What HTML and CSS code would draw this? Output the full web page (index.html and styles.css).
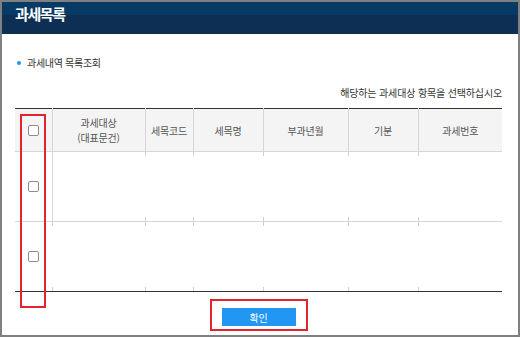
FILE: index.html
```html
<!DOCTYPE html>
<html lang="ko">
<head>
  <meta charset="UTF-8" />
  <meta name="viewport" content="width=device-width, initial-scale=1.0"/>
  <title>과세목록</title>
  <link rel="stylesheet" href="styles.css">
</head>
<body>
  <div class="frame">
    <div class="header">
      <h1>과세목록</h1>
    </div>

    <div class="content">
      <p class="subtitle">과세내역 목록조회</p>
      <p class="guide">해당하는 과세대상 항목을 선택하십시오</p>

      <table class="list">
        <colgroup>
          <col style="width: 37px">
          <col style="width: 93px">
          <col style="width: 48px">
          <col style="width: 70px">
          <col style="width: 85px">
          <col style="width: 70px">
          <col style="width: 84px">
        </colgroup>
        <thead>
          <tr>
            <th><input type="checkbox" class="chk"></th>
            <th>과세대상<br>(대표문건)</th>
            <th>세목코드</th>
            <th>세목명</th>
            <th>부과년월</th>
            <th>기분</th>
            <th>과세번호</th>
          </tr>
        </thead>
        <tbody>
          <tr class="first">
            <td><input type="checkbox" class="chk"></td>
            <td></td><td></td><td></td><td></td><td></td><td></td>
          </tr>
          <tr>
            <td><input type="checkbox" class="chk"></td>
            <td></td><td></td><td></td><td></td><td></td><td></td>
          </tr>
        </tbody>
      </table>

      <div class="actions">
        <button class="btn-ok">확인</button>
      </div>
    </div>

    <!-- annotation boxes -->
    <div class="mark mark-check"></div>
    <div class="mark mark-btn"></div>
  </div>
</body>
</html>
```

FILE: styles.css
```css
* {
  box-sizing: border-box;
}

body {
  margin: 0;
  font-family: "Noto Sans CJK KR", "Noto Sans", sans-serif;
  color: #333;
}

.frame {
  position: relative;
  width: 520px;
  height: 337px;
  border: 2px solid #808080;
  background: #fff;
}

.header {
  height: 32px;
  padding-left: 13px;
  background: linear-gradient(#083a66 0, #083a66 13px, #0d2f53 13px);
}

.header h1 {
  margin: 0;
  font-size: 15px;
  line-height: 24px;
  font-weight: bold;
  letter-spacing: -1.4px;
  color: #fff;
}

.content {
  padding: 0 16px 0 13px;
}

.subtitle {
  display: flex;
  align-items: center;
  gap: 6px;
  margin: 22px 0 0 2px;
  font-size: 10px;
  line-height: 14px;
  letter-spacing: -0.3px;
  color: #333;
}

.subtitle::before {
  content: "";
  width: 4px;
  height: 4px;
  border-radius: 50%;
  background: #2196f3;
}

.guide {
  margin: 16px 0 8px;
  text-align: right;
  font-size: 10px;
  line-height: 14px;
  letter-spacing: -0.15px;
  color: #333;
}

.list {
  width: 487px;
  table-layout: fixed;
  border-collapse: collapse;
  border-top: 1px solid #333;
}

.list th {
  height: 43px;
  padding: 0;
  background: #f4f4f4;
  border-bottom: 1px solid #d6d6d6;
  font-size: 10px;
  line-height: 15px;
  font-weight: normal;
  letter-spacing: -0.2px;
  color: #555;
}

.list th + th {
  border-left: 1px solid #d6d6d6;
}

.list td {
  height: 70px;
  padding: 0;
  text-align: center;
  border-bottom: 1px solid #d6d6d6;
}

/* short ticks at the column edges of the body rows */
.list td + td {
  background:
    linear-gradient(#d0d0d0, #d0d0d0) left top / 1px 4px no-repeat,
    linear-gradient(#d0d0d0, #d0d0d0) left bottom / 1px 4px no-repeat;
}

.list tr.first td:nth-child(2) {
  background: linear-gradient(#d6d6d6, #d6d6d6) left top / 1px 100% no-repeat;
}

.list tbody tr:last-child td {
  border-bottom: 1px solid #333;
}

.chk {
  appearance: none;
  display: block;
  width: 11px;
  height: 11px;
  margin: 0 auto 0 13px;
  border: 1px solid #8c8c8c;
  border-radius: 2px;
  background: #fff;
}

.actions {
  display: flex;
  justify-content: center;
  padding-top: 16px;
}

.btn-ok {
  width: 74px;
  height: 18px;
  padding: 0;
  border: none;
  background: #2196f3;
  color: #fff;
  font-family: inherit;
  font-size: 10px;
  letter-spacing: -0.3px;
  cursor: pointer;
}

.mark {
  position: absolute;
  border: 2px solid #e4232b;
}

.mark-check {
  left: 18px;
  top: 112px;
  width: 26px;
  height: 194px;
}

.mark-btn {
  left: 208px;
  top: 297px;
  width: 98px;
  height: 32px;
}
```
